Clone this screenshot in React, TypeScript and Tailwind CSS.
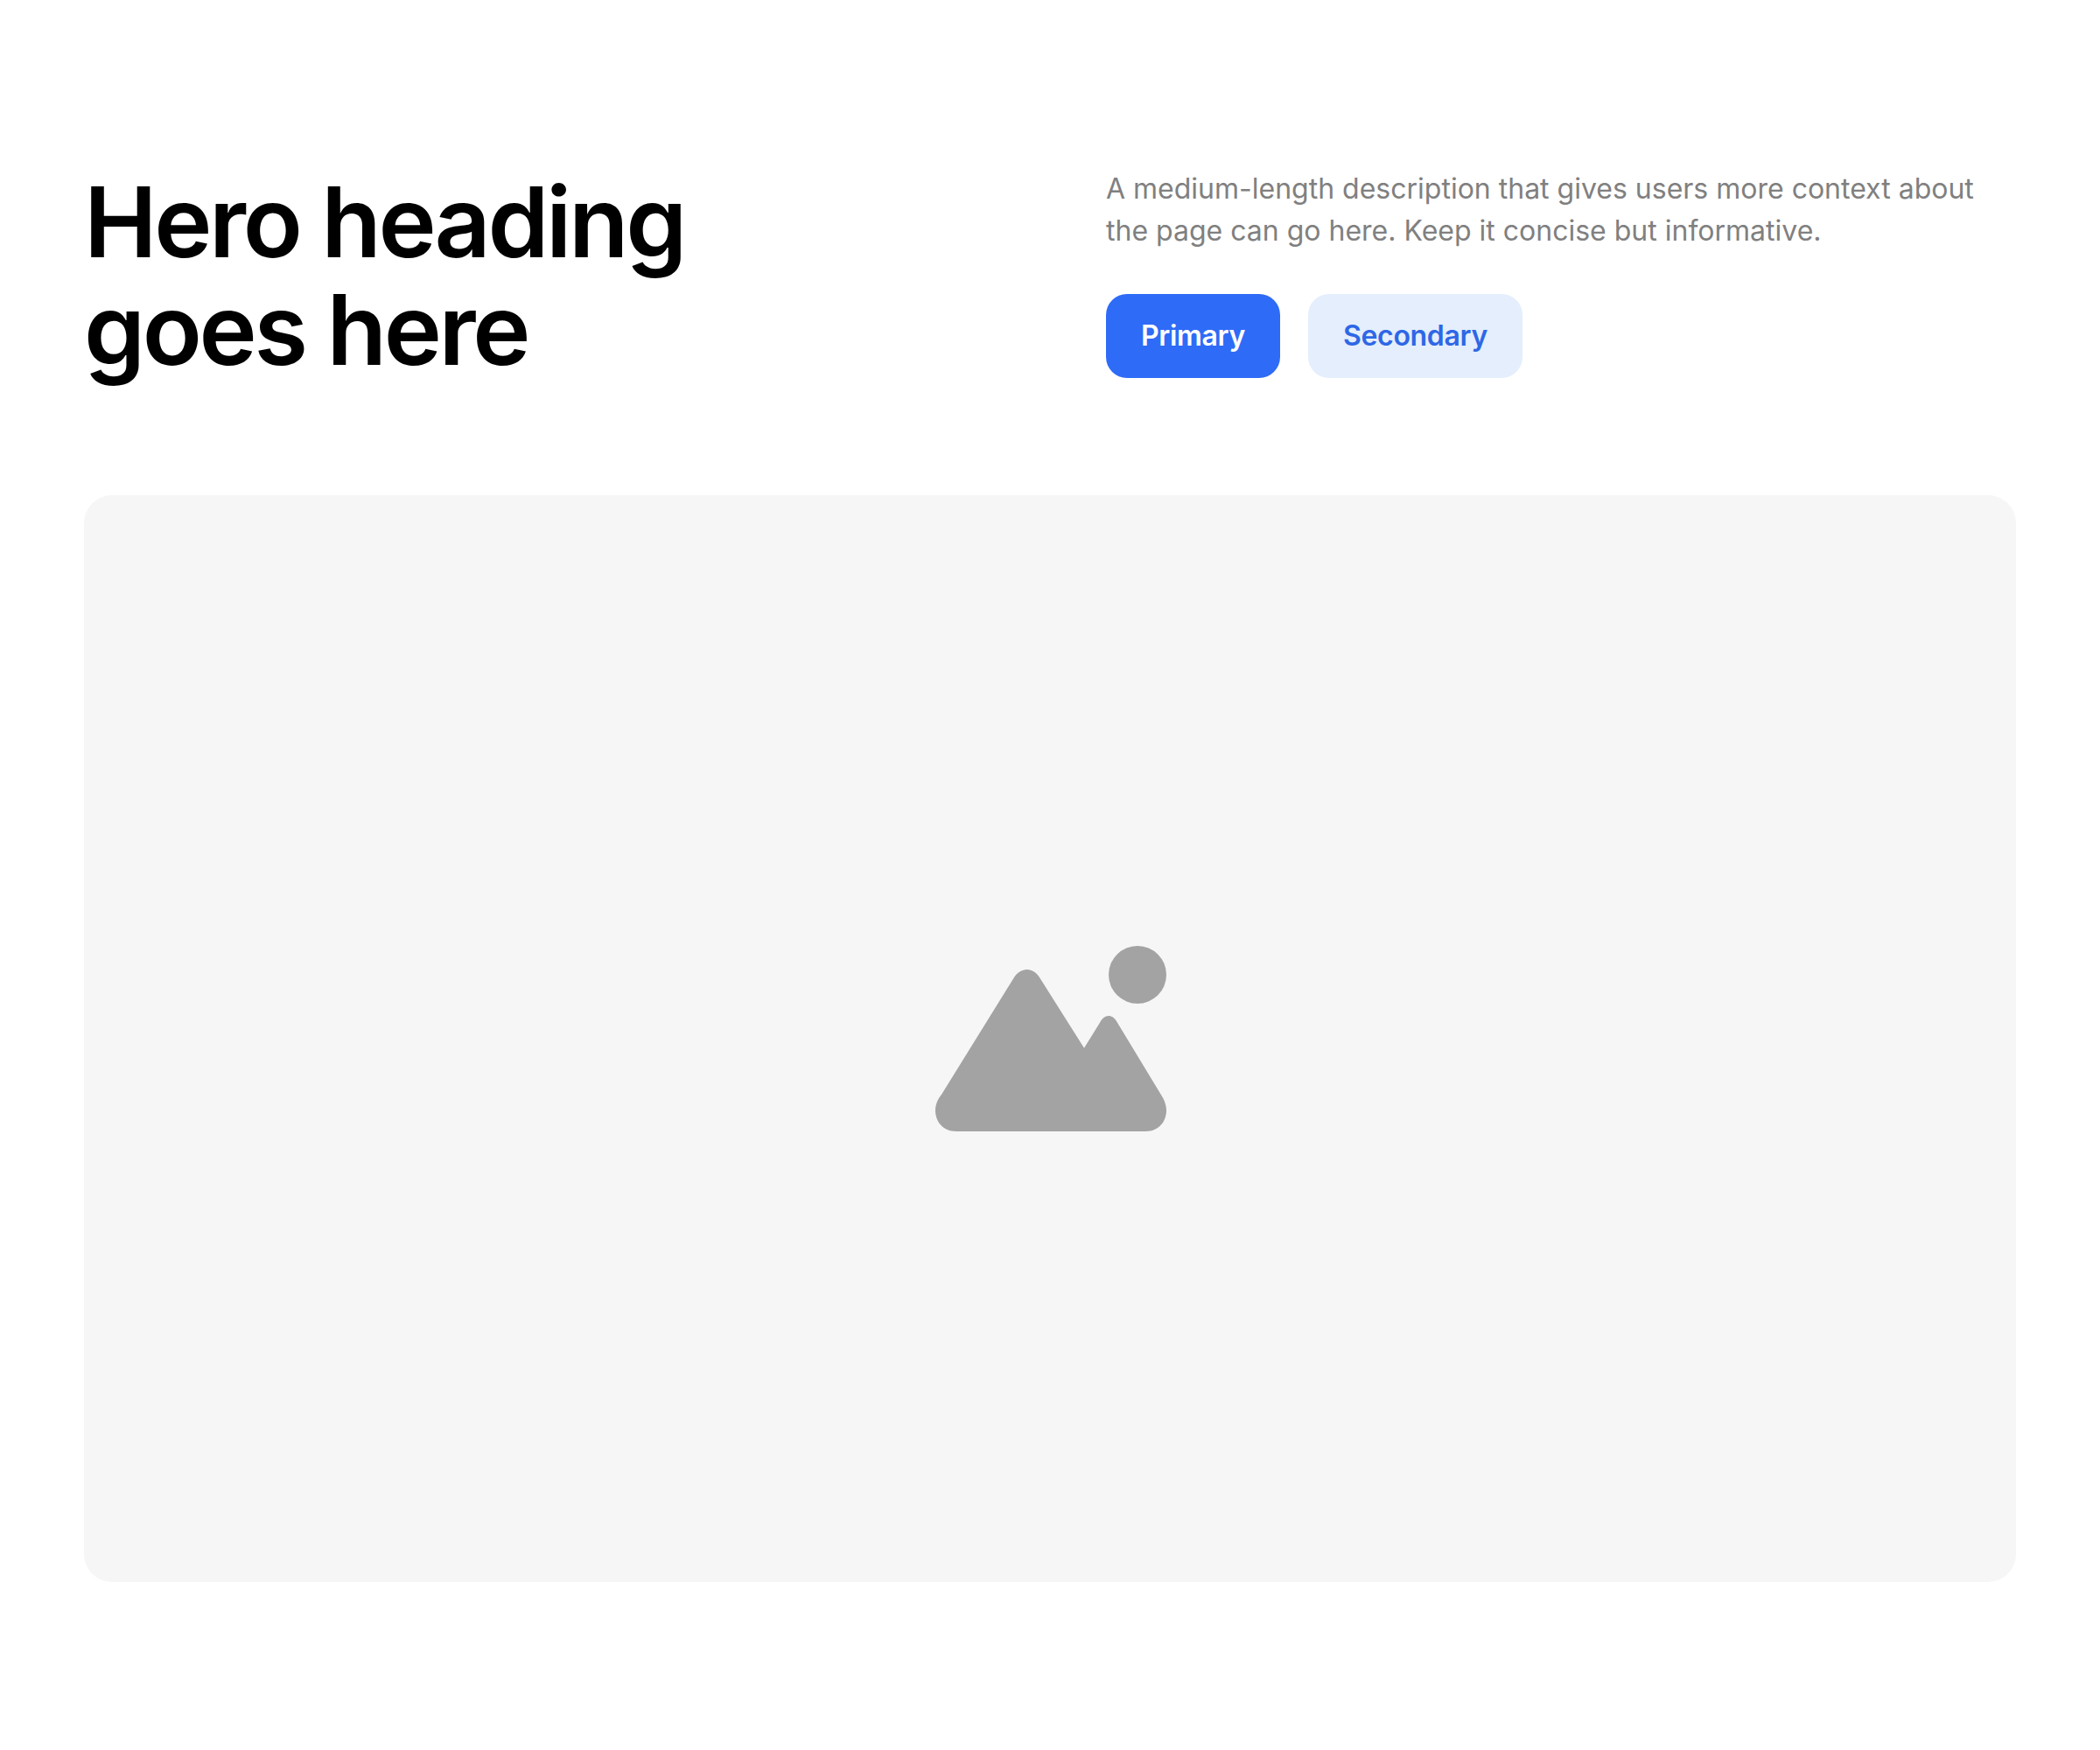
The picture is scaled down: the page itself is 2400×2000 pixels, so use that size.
export default function App() {
  return (
    <div className="min-h-[2000px] bg-white px-24 pt-48 font-['Inter',sans-serif]">
      <div className="grid grid-cols-2 gap-32">
        <h1 className="text-[112px] leading-[123px] font-semibold tracking-[-0.03em] text-black">
          Hero heading
          <br />
          goes here
        </h1>
        <div>
          <p className="text-[32px] leading-[1.5] text-[#808080]">
            A medium-length description that gives users more context about the page can go here. Keep it concise but informative.
          </p>
          <div className="mt-12 flex gap-8">
            <button className="h-24 rounded-3xl bg-[#2e6bf7] px-10 text-[32px] font-semibold tracking-[-0.01em] text-white">Primary</button>
            <button className="h-24 rounded-3xl bg-[#e4eefc] px-10 text-[32px] font-semibold tracking-[-0.01em] text-[#2e67e6]">Secondary</button>
          </div>
        </div>
      </div>
      <div className="mt-[128px] flex h-[1242px] items-center justify-center rounded-[32px] bg-[#f6f6f6]">
        <svg className="ml-[2px]" width="264" height="212" viewBox="0 0 264 212" fill="#a3a3a3">
          <circle cx="231" cy="33" r="33" />
          <path d="M24 212C8 212 0 200 0 188C0 181 3 175 7.4 169.3L90 36C93.5 30.5 99 27 104.7 27C110.5 27 115.5 30.5 119 36L170 116.7L188 87.7C190.5 83 194 80 198 80C202 80 205.5 83 208 87.7L257.4 169.3C261 175 264 181 264 188C264 200 256 212 240 212Z" />
        </svg>
      </div>
    </div>
  );
}
